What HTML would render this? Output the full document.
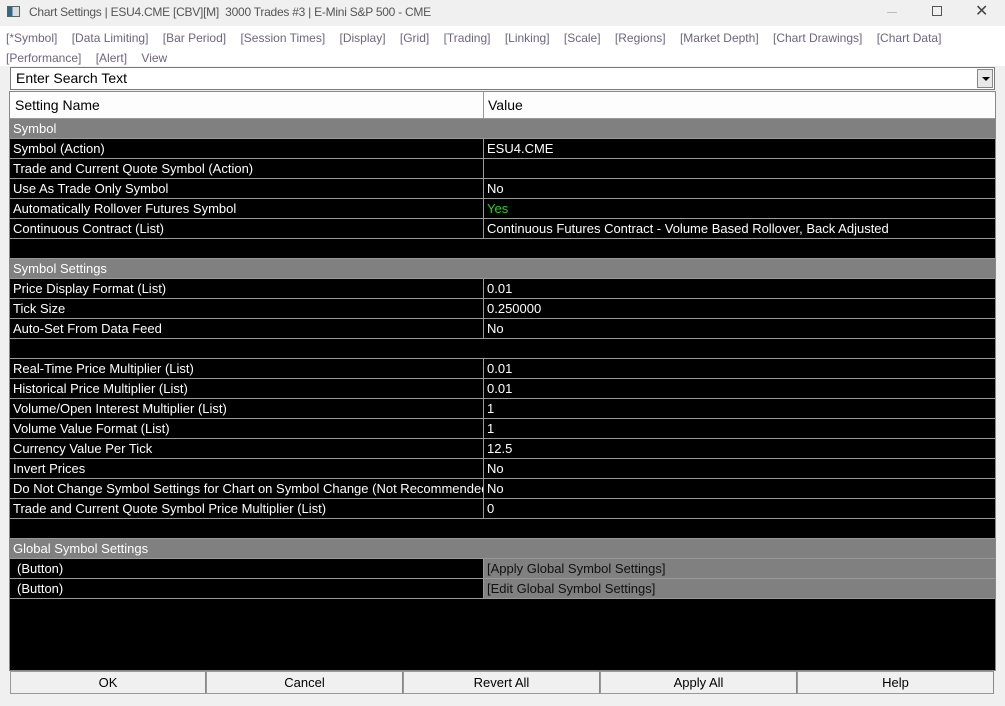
<!DOCTYPE html>
<html><head><meta charset="utf-8"><style>
*{margin:0;padding:0;box-sizing:border-box}
body{width:1005px;height:706px;background:#f0f0f0;font-family:"Liberation Sans",Arial,sans-serif;font-size:12px;position:relative;overflow:hidden}
.title{position:absolute;left:0;top:0;width:1005px;height:26px;background:#f0f0f0;color:#555;font-size:12px}
.menu{position:absolute;left:0;top:26px;width:1005px;height:40px;background:#fff;color:#6e6480;font-size:12px;line-height:20px;padding-left:6px;padding-top:2px}
.menu span{margin-right:11px}
.search{position:absolute;left:10px;top:67px;width:985px;height:23px;background:#fff;border:1px solid #7a7a7a;font-size:14px;line-height:21px;padding-left:5px}
.dd{position:absolute;right:1px;top:1px;width:16px;height:19px;background:#e8e8e8;border:1px solid #888}
.grid{position:absolute;left:9px;top:91px;width:987px;height:580px;background:#000;border:1px solid #888}
.hdr{height:27px;border-bottom:1px solid #999;font-size:14px;line-height:27px;position:relative;background:#fdfdfd}
.row{height:20px;border-bottom:1px solid #999;position:relative;color:#fff;font-size:13px;line-height:19px;white-space:nowrap;overflow:hidden}
.n{position:absolute;left:3px;width:470px;overflow:hidden}
.v{position:absolute;left:473px;top:0;bottom:0;right:0;padding-left:3px;border-left:1px solid #999}
.sec{background:#808080;color:#fff}
.gv{background:#808080;color:#111}
.btns{position:absolute;top:671px;left:10px;height:23px}
.b{position:absolute;top:0;height:23px;background:#f0f0f0;border:1px solid #999;border-right-color:#888;text-align:center;line-height:22px;font-size:13px;color:#000}
</style></head><body>
<div class="title">
<div style="position:absolute;left:7px;top:6px;width:13px;height:11px;border:1px solid #566;background:linear-gradient(90deg,#2e6a8a 0 40%,#ddd 40%)"></div>
<div style="position:absolute;left:29px;top:5px;letter-spacing:-0.25px">Chart Settings | ESU4.CME [CBV][M]&nbsp; 3000 Trades #3 | E-Mini S&amp;P 500 - CME</div>
<div style="position:absolute;left:887px;top:12px;width:10px;height:1px;background:#bbb"></div>
<div style="position:absolute;left:932px;top:6px;width:10px;height:10px;border:1px solid #555"></div>
<div style="position:absolute;left:975px;top:1px;font-size:16px;color:#444">✕</div>
</div>
<div class="menu"><span>[*Symbol]</span> <span>[Data Limiting]</span> <span>[Bar Period]</span> <span>[Session Times]</span> <span>[Display]</span> <span>[Grid]</span> <span>[Trading]</span> <span>[Linking]</span> <span>[Scale]</span> <span>[Regions]</span> <span>[Market Depth]</span> <span>[Chart Drawings]</span> <span>[Chart Data]</span><br><span>[Performance]</span> <span>[Alert]</span> <span>View</span></div>
<div class="search">Enter Search Text<div class="dd"><div style="margin:7px 0 0 4px;width:0;height:0;border-left:4px solid transparent;border-right:4px solid transparent;border-top:4px solid #000"></div></div></div>
<div class="grid">
<div class="hdr"><span style="position:absolute;left:5px;color:#000">Setting Name</span><span style="position:absolute;left:473px;top:0;bottom:0;border-left:1px solid #999;padding-left:4px;color:#000">Value</span></div>
<div class="row sec"><span class="n">Symbol</span></div>
<div class="row"><span class="n">Symbol (Action)</span><span class="v">ESU4.CME</span></div>
<div class="row"><span class="n">Trade and Current Quote Symbol (Action)</span><span class="v"></span></div>
<div class="row"><span class="n">Use As Trade Only Symbol</span><span class="v">No</span></div>
<div class="row"><span class="n">Automatically Rollover Futures Symbol</span><span class="v" style="color:#2ecc2e">Yes</span></div>
<div class="row"><span class="n">Continuous Contract (List)</span><span class="v">Continuous Futures Contract - Volume Based Rollover, Back Adjusted</span></div>
<div class="row"></div>
<div class="row sec"><span class="n">Symbol Settings</span></div>
<div class="row"><span class="n">Price Display Format (List)</span><span class="v">0.01</span></div>
<div class="row"><span class="n">Tick Size</span><span class="v">0.250000</span></div>
<div class="row"><span class="n">Auto-Set From Data Feed</span><span class="v">No</span></div>
<div class="row"></div>
<div class="row"><span class="n">Real-Time Price Multiplier (List)</span><span class="v">0.01</span></div>
<div class="row"><span class="n">Historical Price Multiplier (List)</span><span class="v">0.01</span></div>
<div class="row"><span class="n">Volume/Open Interest Multiplier (List)</span><span class="v">1</span></div>
<div class="row"><span class="n">Volume Value Format (List)</span><span class="v">1</span></div>
<div class="row"><span class="n">Currency Value Per Tick</span><span class="v">12.5</span></div>
<div class="row"><span class="n">Invert Prices</span><span class="v">No</span></div>
<div class="row"><span class="n">Do Not Change Symbol Settings for Chart on Symbol Change (Not Recommended)</span><span class="v" style="background:#000">No</span></div>
<div class="row"><span class="n">Trade and Current Quote Symbol Price Multiplier (List)</span><span class="v">0</span></div>
<div class="row"></div>
<div class="row sec"><span class="n">Global Symbol Settings</span></div>
<div class="row"><span class="n" style="left:7px">(Button)</span><span class="v gv">[Apply Global Symbol Settings]</span></div>
<div class="row"><span class="n" style="left:7px">(Button)</span><span class="v gv">[Edit Global Symbol Settings]</span></div>
</div>
<div class="btns">
<div class="b" style="left:0;width:196px">OK</div>
<div class="b" style="left:196px;width:197px">Cancel</div>
<div class="b" style="left:393px;width:197px">Revert All</div>
<div class="b" style="left:590px;width:197px">Apply All</div>
<div class="b" style="left:787px;width:197px">Help</div>
</div>
</body></html>
